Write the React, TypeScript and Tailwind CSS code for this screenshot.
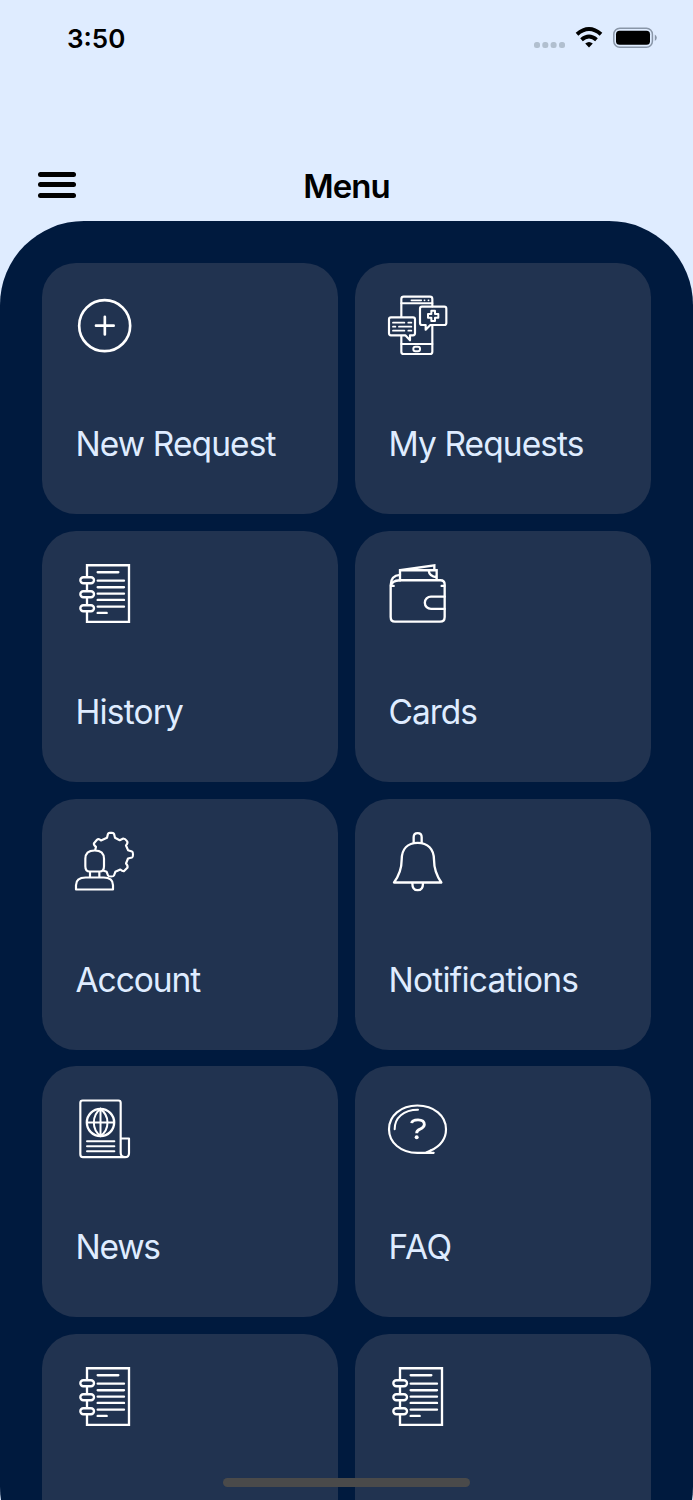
import type { ReactNode } from "react";

type IconProps = { viewBox: string; children: ReactNode };

function LineIcon({ viewBox, children }: IconProps) {
  return (
    <svg
      viewBox={viewBox}
      className="h-[60px] w-[60px] shrink-0 overflow-visible text-white"
      fill="none"
      stroke="currentColor"
      strokeWidth="7"
      strokeLinecap="round"
      strokeLinejoin="round"
      aria-hidden="true"
    >
      {children}
    </svg>
  );
}

function PlusIcon() {
  return (
    <LineIcon viewBox="45 48 180 180">
      <circle cx="134" cy="137" r="76.500" strokeWidth="8" />
      <path d="M108 137h53M134.500 110.500v53" strokeWidth="8" />
    </LineIcon>
  );
}

function RequestsIcon() {
  return (
    <LineIcon viewBox="39 48 180 180">
      <path d="M79 111V57q0-7 7-7h79q7 0 7 7v22M172 136v79q0 7-7 7H86q-7 0-7-7v-47" strokeWidth="6.500" />
      <path d="M79 70h93M79 192h93" strokeWidth="6" />
      <path d="M109 61h30M148 61h1M160 61h1" strokeWidth="5" />
      <rect x="115" y="200" width="20" height="14" rx="6" strokeWidth="6" />
      <path d="M141 80h67q6 0 6 6v43q0 6-6 6h-42l-14 14v-14h-11q-6 0-6-6V86q0-6 6-6z" strokeWidth="6.500" />
      <path d="M169 92h11v10h10v11h-10v10h-11v-10h-10v-11h10z" strokeWidth="6" />
      <path d="M48 112h66q6 0 6 6v42q0 6-6 6h-9v15l-14-15H48q-6 0-6-6v-42q0-6 6-6z" strokeWidth="6.500" />
      <path d="M54 128h34M100 128h9M54 140h7M72 140h37M54 152h34M100 152h9" strokeWidth="5.500" />
    </LineIcon>
  );
}

function NotebookIcon() {
  return (
    <LineIcon viewBox="30 41.250 180 180">
      <path d="M66 80V45h126v170H66v-31M66 100v22M66 142v22" strokeLinejoin="miter" />
      <rect x="46" y="81" width="41" height="18" rx="9" />
      <rect x="46" y="123" width="41" height="18" rx="9" />
      <rect x="46" y="165" width="41" height="18" rx="9" />
      <path d="M98 66h62M98 91h79M98 111h79M98 130h79M98 149h79M98 169h79M98 188h27" />
    </LineIcon>
  );
}

function WalletIcon() {
  return (
    <LineIcon viewBox="39 41.250 180 180">
      <path d="M75 90h121q13 0 13 13v97q0 14-14 14H60q-13 0-13-14v-95q0-29 28-31" />
      <path d="M48 107q1-16 27-17M48 107h8M200 107h8" />
      <path d="M75 90V60h110v29M75 60l103-15v15M161 61q2 17 24 20" strokeLinejoin="miter" />
      <path d="M209 139h-41a18.500 18.500 0 0 0 0 37h41" />
    </LineIcon>
  );
}

function AccountIcon() {
  return (
    <LineIcon viewBox="30 35.500 180 180">
      <path
        d="M91 88l2-8q-8-6-6-11l9-10q5-5 12 2l18-8 3-12q1-3 5-3h7q5 0 6 3l3 12 14 7 11-5q5 0 11 8 4 5-3 13l6 14 12 4q3 1 3 9 0 8-3 9l-12 3-6 15q7 8 4 13l-9 9q-4 3-12-4l-15 7-4 11q-1 3-9 3-8 0-9-3l-4-11-9-3"
        strokeWidth="6.500"
      />
      <path
        d="M61 116q0-25 28-25t28 25v22q0 16-13 16H74q-13 0-13-16zM75 155v15M103 155v15M33 208v-13q0-23 29-23h54q28 0 28 23v13z"
        strokeWidth="6.500"
      />
    </LineIcon>
  );
}

function BellIcon() {
  return (
    <LineIcon viewBox="24 34.500 180 180">
      <path d="M42 186q23-31 23-68c0-33 18-51 48-51s49 18 49 51q0 37 22 68z" />
      <path d="M101 67V50q0-12 12-12t12 12v17M97 188q0 21 16 21t16-21" />
    </LineIcon>
  );
}

function NewsIcon() {
  return (
    <LineIcon viewBox="30 41.500 180 180">
      <path
        d="M167 159V53q0-7-7-7H53q-7 0-7 7v154q0 9 8 9h126q12 0 12-12v-44h-25v43q0 13 13 13"
        strokeWidth="6.500"
      />
      <circle cx="106.500" cy="112" r="41" />
      <path d="M106.500 71v82M66 112h81M106.500 71q-20 16-20 41t20 41q21-16 21-41t-21-41" strokeWidth="6" />
      <path d="M66 168h82M66 183h82M66 198h82" strokeWidth="6" />
    </LineIcon>
  );
}

function FaqIcon() {
  return (
    <LineIcon viewBox="39 41.500 180 180">
      <path d="M176 203h-49c-50 0-85-31-85-71s35-71 85-71 86 31 86 71c0 29-18 51-46 64" strokeWidth="6.500" />
      <path d="M167 196l-13 6M59 132c0-34 26-58 70-58" strokeWidth="6" />
      <path d="M110 114q1-10 19-10 19 0 19 14 0 8-13 14-10 4-10 12" strokeLinecap="butt" strokeWidth="8.500" />
      <circle cx="125" cy="156.500" r="6" fill="currentColor" stroke="none" />
    </LineIcon>
  );
}

type Item = { label: string; icon: ReactNode; tracking: string };

const items: Item[] = [
  { label: "New Request", icon: <PlusIcon />, tracking: "tracking-[-0.920px]" },
  { label: "My Requests", icon: <RequestsIcon />, tracking: "tracking-[-0.920px]" },
  { label: "History", icon: <NotebookIcon />, tracking: "tracking-[-0.850px]" },
  { label: "Cards", icon: <WalletIcon />, tracking: "tracking-[-1px]" },
  { label: "Account", icon: <AccountIcon />, tracking: "tracking-[-1.050px]" },
  { label: "Notifications", icon: <BellIcon />, tracking: "tracking-[-0.780px]" },
  { label: "News", icon: <NewsIcon />, tracking: "tracking-[-1.250px]" },
  { label: "FAQ", icon: <FaqIcon />, tracking: "tracking-[-0.300px]" },
  { label: "", icon: <NotebookIcon />, tracking: "" },
  { label: "", icon: <NotebookIcon />, tracking: "" },
];

function MenuCard({ label, icon, tracking }: Item) {
  return (
    <div className="flex h-[251px] flex-col rounded-[34px] bg-[#213350] pt-[33px] pl-[33px]">
      {icon}
      <span className={`mt-[65px] pl-[0.500px] text-[33.500px] leading-[46px] whitespace-nowrap text-[#dfecff] ${tracking}`}>
        {label}
      </span>
    </div>
  );
}

function StatusBar() {
  return (
    <div className="flex h-[76px] items-center justify-between pr-[36px] pl-[67px]">
      <span className="pt-px text-[26px] leading-none font-semibold">3:50</span>
      <svg viewBox="0 0 124 24" className="h-6 w-[124px]" aria-hidden="true">
        <g fill="#b1bfcf">
          <rect x="1" y="16" width="6" height="6" rx="2.500" />
          <rect x="9.300" y="16" width="6" height="6" rx="2.500" />
          <rect x="17.600" y="16" width="6" height="6" rx="2.500" />
          <rect x="26" y="16" width="6" height="6" rx="2.500" />
        </g>
        <g fill="none" stroke="#000" strokeWidth="4">
          <path d="M44 8.200q12-10.400 24 0" />
          <path d="M48.500 13.700q7.500-6.400 15 0" />
        </g>
        <path d="M52.200 17.600q3.800-3.200 7.600 0L56 21.600z" />
        <rect x="80.800" y="2.300" width="38.600" height="19" rx="6" fill="none" stroke="#8996a8" strokeWidth="1.500" />
        <rect x="83" y="4.800" width="34" height="14" rx="3.500" />
        <path d="M121.800 8.500q4 3 0 6.500z" fill="#8996a8" />
      </svg>
    </div>
  );
}

export default function App() {
  return (
    <div className="relative h-[1500px] w-[693px] overflow-hidden bg-[#dfecff] font-['Inter',sans-serif] text-black">
      <StatusBar />
      <header className="mt-[72px] grid h-[73px] grid-cols-3 items-center px-[38px]">
        <div className="flex w-[38px] flex-col gap-[5.500px]">
          <span className="h-[5px] rounded-full bg-black" />
          <span className="h-[5px] rounded-full bg-black" />
          <span className="h-[5px] rounded-full bg-black" />
        </div>
        <h1 className="pt-[3px] text-center text-[33px] leading-none font-semibold tracking-[-0.950px]">Menu</h1>
      </header>
      <main className="h-[1350px] rounded-[84px] bg-[#001a3e] px-[42px] pt-[42px]">
        <div className="grid grid-cols-2 gap-x-[17px] gap-y-[16.750px]">
          {items.map((item, i) => (
            <MenuCard key={i} {...item} />
          ))}
        </div>
      </main>
      <div className="absolute bottom-[13px] left-[223px] h-[9px] w-[247px] rounded-full bg-[#4a4a4a]" />
    </div>
  );
}
